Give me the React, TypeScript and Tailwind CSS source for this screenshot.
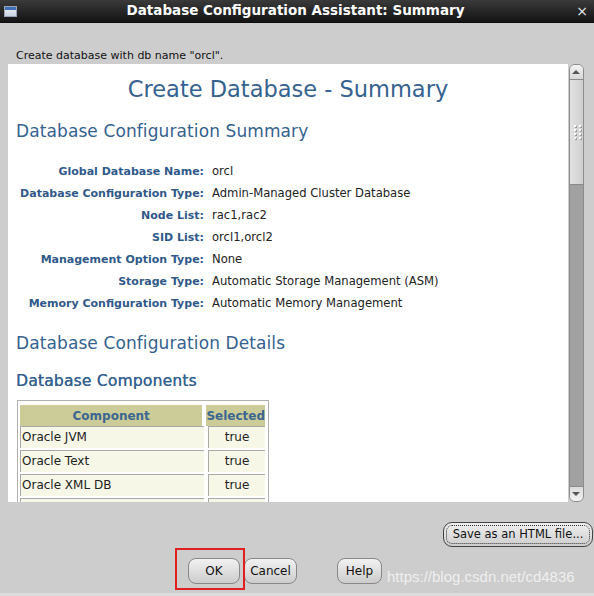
import React from "react";

const rows: [string, string][] = [
  ["Global Database Name:", "orcl"],
  ["Database Configuration Type:", "Admin-Managed Cluster Database"],
  ["Node List:", "rac1,rac2"],
  ["SID List:", "orcl1,orcl2"],
  ["Management Option Type:", "None"],
  ["Storage Type:", "Automatic Storage Management (ASM)"],
  ["Memory Configuration Type:", "Automatic Memory Management"],
];

const comps = ["Oracle JVM", "Oracle Text", "Oracle XML DB", ""];

export default function App() {
  return (
    <div className="relative w-[594px] h-[596px] bg-[#cdcdcd] flex flex-col overflow-hidden font-['DejaVu_Sans',sans-serif]">
      {/* title bar */}
      <div className="h-[23px] shrink-0 bg-gradient-to-b from-[#3a3a3a] to-[#141414] flex items-center px-[4px] border-b border-[#0c0c0c]">
        <div className="w-[13px] h-[11px] border border-[#9aa4b4] bg-gradient-to-b from-[#f2f2f2] to-[#c8d4e4] flex flex-col">
          <div className="h-[3px] bg-[#3f6fb6]" />
        </div>
        <div className="flex-1 text-center text-white font-bold text-[13.5px] leading-none">
          Database Configuration Assistant: Summary
        </div>
        <div className="w-[16px] text-center text-[#e8e8e8] text-[14px] leading-none">×</div>
      </div>

      <div className="pl-[16px] pt-[26px] text-[11px] leading-[13px] text-[#111]">Create database with db name "orcl".</div>

      {/* panel */}
      <div className="ml-[8px] mt-[2px] w-[576px] h-[438px] flex shrink-0">
        <div className="flex-1 bg-white overflow-hidden pl-[8px] pt-[10px]">
          <div className="text-center text-[22.5px] leading-[30px] text-[#35628f] pr-[8px]">Create Database - Summary</div>
          <div className="mt-[16px] text-[17px] leading-[22px] text-[#35628f] tracking-[0.1px]">Database Configuration Summary</div>
          <div className="mt-[19px] -ml-[8px] flex flex-col">
            {rows.map(([k, v]) => (
              <div key={k} className="h-[22px] flex items-center">
                <div className="w-[196px] text-right whitespace-nowrap text-[11px] font-bold text-[#30598a]">{k}</div>
                <div className="ml-[8px] whitespace-nowrap text-[11.6px] text-[#222]">{v}</div>
              </div>
            ))}
          </div>
          <div className="mt-[17px] text-[17px] leading-[22px] text-[#35628f] tracking-[0.1px]">Database Configuration Details</div>
          <div className="mt-[17px] text-[15.5px] leading-[20px] text-[#35628f] tracking-[0.2px] [text-shadow:0.3px_0_0_#35628f]">Database Components</div>
          <div className="mt-[9px] ml-[1px] w-[252px] border border-[#b0b0b0] pt-[4px] pl-[2px] pr-[3px] flex flex-col">
            <div className="flex gap-[4px] h-[21px]">
              <div className="w-[184px] bg-[#cccc99] flex items-center justify-center text-[12px] font-bold text-[#3a6690]">Component</div>
              <div className="flex-1 bg-[#cccc99] flex items-center justify-center text-[12px] font-bold text-[#3a6690] whitespace-nowrap">Selected</div>
            </div>
            {comps.map((c, i) => (
              <div key={i} className={`flex gap-[4px] h-[22px] ${i === 0 ? "mt-0" : "mt-[2px]"}`}>
                <div className="w-[184px] bg-[#f7f7e7] border-t border-l border-[#a9a9a9] flex items-center pl-[1px] pb-[2px] text-[12px] text-[#222]">{c}</div>
                <div className="flex-1 bg-[#f7f7e7] border-t border-l border-[#a9a9a9] flex items-center justify-center pb-[2px] text-[12px] text-[#222]">{c ? "true" : ""}</div>
              </div>
            ))}
          </div>
        </div>
        {/* scrollbar */}
        <div className="w-[16px] bg-[#cdcdcd] flex flex-col items-center">
          <div className="w-[15px] h-full border border-[#8c8c8c] rounded-t-[6px] rounded-b-[6px] bg-[#d9d9d9] flex flex-col overflow-hidden">
            <div className="h-[15px] border-b border-[#8a8a8a] bg-gradient-to-b from-[#f4f4f4] to-[#d6d6d6] flex items-center justify-center">
              <div className="w-0 h-0 border-l-[4px] border-r-[4px] border-b-[4px] border-l-transparent border-r-transparent border-b-[#555]" />
            </div>
            <div className="h-[105px] bg-gradient-to-r from-[#e2e2e2] to-[#cfcfcf] border-b border-[#8a8a8a] flex flex-col items-center justify-center">
              <div className="grid grid-cols-2 gap-x-[3px] gap-y-[2px] translate-x-[1px]">
                {Array.from({ length: 8 }).map((_, i) => (
                  <div key={i} className="w-[2px] h-[2px] bg-white shadow-[1px_1px_0_#9a9a9a]" />
                ))}
              </div>
            </div>
            <div className="flex-1 bg-[#a1a1a1]" />
            <div className="h-[15px] border-t border-[#8a8a8a] bg-gradient-to-b from-[#dcdcdc] to-[#f2f2f2] flex items-center justify-center">
              <div className="w-0 h-0 border-l-[4px] border-r-[4px] border-t-[4px] border-l-transparent border-r-transparent border-t-[#555]" />
            </div>
          </div>
        </div>
      </div>

      {/* Save button */}
      <div className="mt-[20px] flex justify-end pr-[1px]">
        <div className="w-[150px] h-[25px] rounded-[9px] border border-[#444] bg-gradient-to-b from-[#f0f0f0] to-[#cdcdcd] p-[2px]">
          <div className="h-full rounded-[6px] border border-dotted border-[#333] flex items-center justify-center text-[11.5px] text-[#111]">Save as an HTML file...</div>
        </div>
      </div>

      {/* bottom buttons */}
      <div className="mt-[11px] flex items-center pl-[188px] h-[26px]">
        <div className="w-[52px] h-[26px] rounded-[8px] border border-[#888] bg-gradient-to-b from-[#f2f2f2] to-[#cccccc] flex items-center justify-center text-[12px] text-[#111]">OK</div>
        <div className="ml-[4px] w-[53px] h-[26px] rounded-[8px] border border-[#888] bg-gradient-to-b from-[#f2f2f2] to-[#cccccc] flex items-center justify-center text-[12px] text-[#111]">Cancel</div>
        <div className="ml-[40px] w-[45px] h-[26px] rounded-[8px] border border-[#888] bg-gradient-to-b from-[#f2f2f2] to-[#cccccc] flex items-center justify-center text-[12px] text-[#111]">Help</div>
      </div>

      {/* red highlight box */}
      <div className="absolute left-[175px] top-[548px] w-[70px] h-[42px] border-2 border-[#e02020]" />
      {/* watermark */}
      <div className="absolute left-[387px] top-[566px] text-[15px] font-['Liberation_Sans',sans-serif] text-white/70">https://blog.csdn.net/cd4836</div>
      <div className="absolute left-0 right-0 bottom-0 h-[3px] bg-[#dcdcdc]" />
    </div>
  );
}
